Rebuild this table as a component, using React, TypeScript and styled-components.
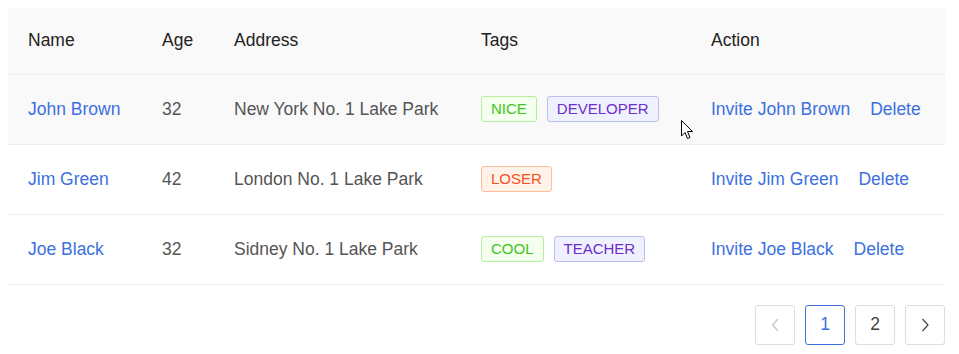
import React from "react";
import styled, { createGlobalStyle } from "styled-components";

const GlobalStyle = createGlobalStyle`
  *, *::before, *::after {
    box-sizing: border-box;
  }
  body {
    margin: 0;
    background: #ffffff;
    font-family: "Liberation Sans", Arial, sans-serif;
  }
`;

const Page = styled.div`
  padding: 8px 14px 0 8px;
  position: relative;
`;

const Table = styled.table`
  width: 100%;
  border-collapse: collapse;
  table-layout: fixed;
  font-size: 17.5px;
`;

const HeadCell = styled.th<{ $w: number }>`
  width: ${({ $w }) => $w}px;
  height: 66px;
  padding: 0 20px;
  text-align: left;
  font-weight: 400;
  color: #222222;
  background: #f9f9f9;
  border-bottom: 1px solid #eeeeee;
`;

const Row = styled.tr<{ $hover?: boolean }>`
  background: ${({ $hover }) => ($hover ? "#f9f9f9" : "#ffffff")};
`;

const Cell = styled.td`
  height: 70px;
  padding: 0 20px;
  color: #555555;
  border-bottom: 1px solid #eeeeee;
  white-space: nowrap;
`;

const Link = styled.a`
  color: #3d70e0;
  text-decoration: none;
  cursor: pointer;
`;

const Actions = styled.div`
  display: flex;
  gap: 20px;
`;

const Tags = styled.div`
  display: flex;
  gap: 10px;
`;

const tagColors = {
  green: { bg: "#f4fff0", border: "#b5ee9c", fg: "#3fc41a" },
  geekblue: { bg: "#eff2fe", border: "#b9c0f0", fg: "#6e2dcc" },
  volcano: { bg: "#fff2e8", border: "#ffbb96", fg: "#f5511c" },
};

type TagColor = keyof typeof tagColors;

const Tag = styled.span<{ $c: TagColor }>`
  display: inline-flex;
  align-items: center;
  height: 26px;
  padding: 0 9px 1px;
  font-size: 15px;
  border-radius: 3px;
  border: 1px solid ${({ $c }) => tagColors[$c].border};
  background: ${({ $c }) => tagColors[$c].bg};
  color: ${({ $c }) => tagColors[$c].fg};
`;

const Pager = styled.div`
  display: flex;
  justify-content: flex-end;
  gap: 10px;
  margin-top: 20px;
`;

const PageBtn = styled.button<{ $active?: boolean; $disabled?: boolean }>`
  width: 40px;
  height: 40px;
  display: flex;
  align-items: center;
  justify-content: center;
  background: #ffffff;
  border: 1px solid ${({ $active }) => ($active ? "#3d70e0" : "#dddddd")};
  border-radius: 3px;
  font-family: "Liberation Sans", Arial, sans-serif;
  font-size: 17.5px;
  color: ${({ $active, $disabled }) =>
    $active ? "#3d70e0" : $disabled ? "#c4c4c4" : "#444444"};
  padding: 0;
  cursor: pointer;
`;

const Cursor = styled.svg`
  position: absolute;
  left: 681px;
  top: 120px;
`;

const data = [
  { name: "John Brown", age: 32, address: "New York No. 1 Lake Park", tags: [["NICE", "green"], ["DEVELOPER", "geekblue"]] },
  { name: "Jim Green", age: 42, address: "London No. 1 Lake Park", tags: [["LOSER", "volcano"]] },
  { name: "Joe Black", age: 32, address: "Sidney No. 1 Lake Park", tags: [["COOL", "green"], ["TEACHER", "geekblue"]] },
];

const Chevron = ({ dir }: { dir: "left" | "right" }) => (
  <svg width="14" height="16" viewBox="0 0 14 16">
    <path
      d={dir === "left" ? "M10 2 L4.5 8 L10 14" : "M4.5 2 L10 8 L4.5 14"}
      fill="none"
      stroke="currentColor"
      strokeWidth="1.2"
    />
  </svg>
);

export default function App() {
  return (
    <Page>
      <GlobalStyle />
      <Table>
        <thead>
          <tr>
            <HeadCell $w={134}>Name</HeadCell>
            <HeadCell $w={72}>Age</HeadCell>
            <HeadCell $w={247}>Address</HeadCell>
            <HeadCell $w={230}>Tags</HeadCell>
            <HeadCell $w={254}>Action</HeadCell>
          </tr>
        </thead>
        <tbody>
          {data.map((d, i) => (
            <Row key={d.name} $hover={i === 0}>
              <Cell>
                <Link>{d.name}</Link>
              </Cell>
              <Cell>{d.age}</Cell>
              <Cell>{d.address}</Cell>
              <Cell>
                <Tags>
                  {d.tags.map(([t, c]) => (
                    <Tag key={t} $c={c as TagColor}>
                      {t}
                    </Tag>
                  ))}
                </Tags>
              </Cell>
              <Cell>
                <Actions>
                  <Link>Invite {d.name}</Link>
                  <Link>Delete</Link>
                </Actions>
              </Cell>
            </Row>
          ))}
        </tbody>
      </Table>
      <Pager>
        <PageBtn $disabled>
          <Chevron dir="left" />
        </PageBtn>
        <PageBtn $active>1</PageBtn>
        <PageBtn>2</PageBtn>
        <PageBtn>
          <Chevron dir="right" />
        </PageBtn>
      </Pager>
      <Cursor width="13" height="21" viewBox="0 0 13 21">
        <path
          d="M0.5 0.5 L0.5 16 L4 12.5 L6.5 18.5 L9 17.5 L6.5 11.5 L11.5 11.5 Z"
          fill="#ffffff"
          stroke="#000000"
          strokeWidth="1"
        />
      </Cursor>
    </Page>
  );
}
